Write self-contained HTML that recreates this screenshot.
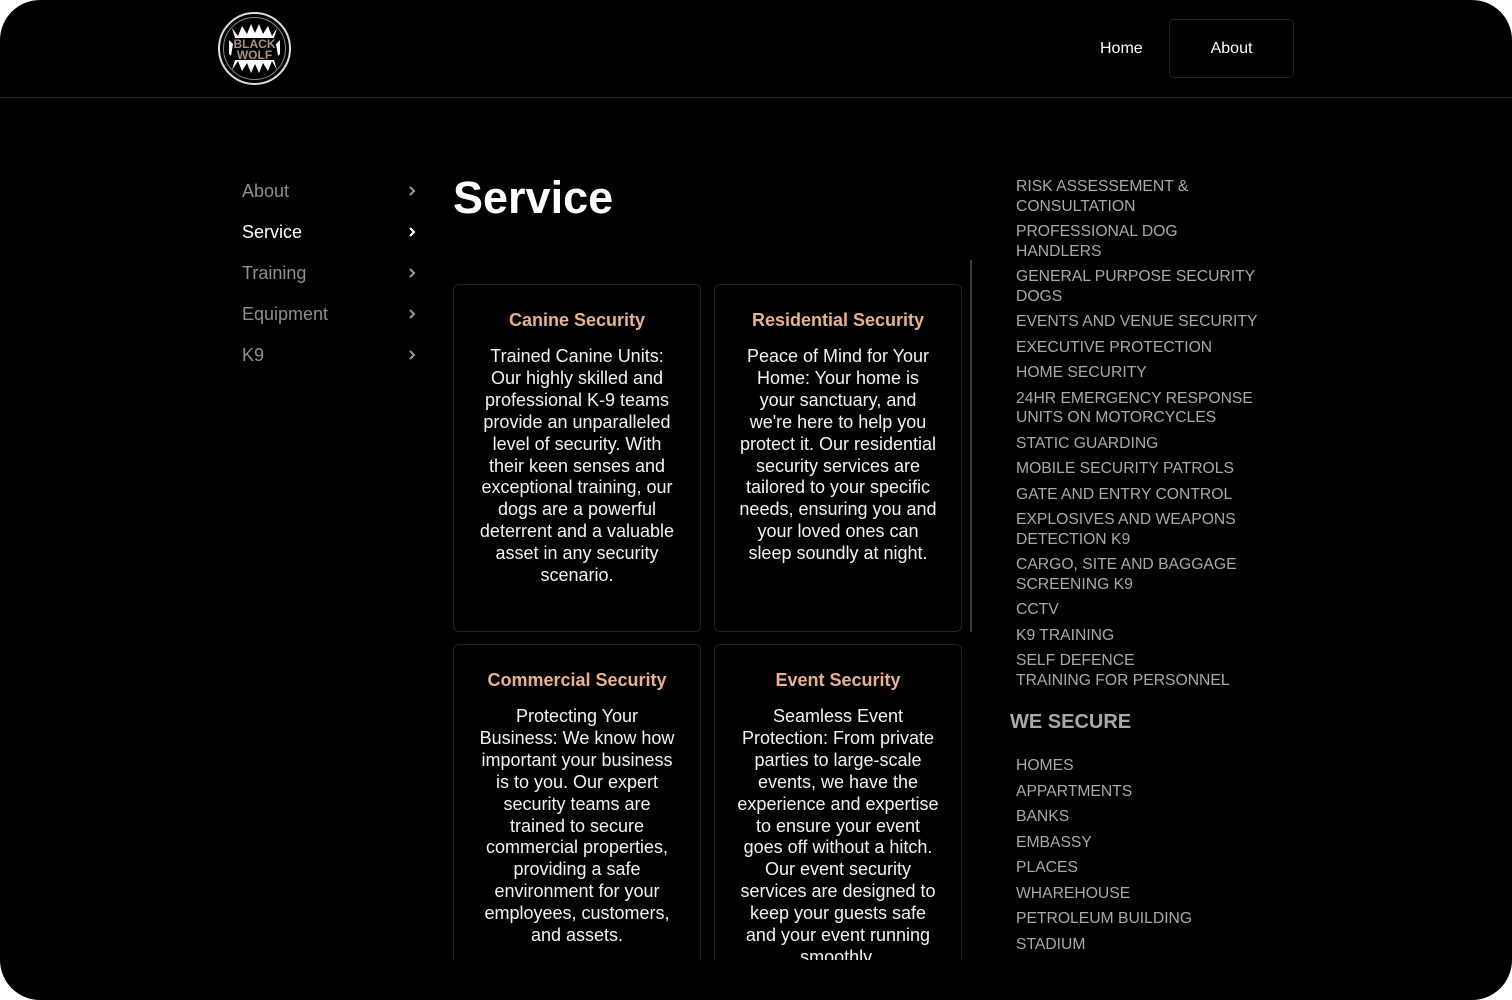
<!DOCTYPE html>
<html><head><meta charset="utf-8"><style>
*{margin:0;padding:0;box-sizing:border-box}
html,body{width:1512px;height:1000px;background:#fff;overflow:hidden}
body{font-family:"Liberation Sans",sans-serif}
.frame{position:absolute;left:0;top:0;width:1512px;height:1000px;background:#000;border-radius:40px;overflow:hidden;color:#fff}
.hdr{position:absolute;left:0;top:0;width:1512px;height:98px;border-bottom:1px solid #2a2a2a}
.logo{position:absolute;left:218px;top:12px;width:73px;height:73px;border-radius:50%;border:2px solid #ddd;background:#000;overflow:hidden}
.home{position:absolute;left:1100px;top:40px;font-size:16px}
.aboutb{position:absolute;left:1169px;top:19px;width:125px;height:59px;border:1px solid #222;border-radius:5px;font-size:16px;text-align:center;line-height:58px}
.nav{position:absolute;left:242px;top:179px;width:175px}
.nav div{height:41px;font-size:18px;color:#8e8e8e;position:relative;line-height:24px}
.nav div.a{color:#fff}
.nav div svg{position:absolute;right:0;top:6px}
h1{position:absolute;left:453px;top:172px;font-size:45px;font-weight:bold}
.main{position:absolute;left:453px;top:284px;width:509px;height:676px;overflow:hidden}
.card{position:absolute;width:248px;border:1px solid #222;border-radius:6px;text-align:center;padding:24px 22px 0}
.card h3{font-size:18px;color:#e9b18d;line-height:22px;margin-bottom:15px}
.card p{font-size:18px;line-height:21.9px;color:#f2f2f2}
.sb{position:absolute;left:970px;top:260px;width:2px;height:372px;background:#3a3a3a}
.rl{position:absolute;left:1016px;top:177px;width:260px;color:#a9a9a9;font-size:15.7px;line-height:19.5px}
.rl div{margin-bottom:6px}
.ws{position:absolute;left:1010px;top:711px;font-size:20px;font-weight:bold;color:#a9a9a9}
</style></head><body><div class="frame">
<div class="hdr">
<div class="logo"><svg width="69" height="69" viewBox="0 0 69 69">
<circle cx="34.5" cy="34.5" r="31" fill="none" stroke="#888" stroke-width="1"/>
<path d="M12 14 L18 22 L22 12 L27 20 L31 10 L35 19 L39 10 L43 20 L48 12 L52 22 L57 14 L54 24 L15 24Z" fill="#fff"/>
<path d="M12 56 L18 47 L22 57 L27 49 L31 59 L35 50 L39 59 L43 49 L48 57 L52 47 L57 56 L54 46 L15 46Z" fill="#fff"/>
<path d="M9 26 L13 30 L11 42 L9 40Z M60 26 L56 30 L58 42 L60 40Z" fill="#fff"/>
<text x="34.5" y="34" text-anchor="middle" font-size="12" font-weight="bold" fill="#a8917e" font-family="Liberation Sans">BLACK</text>
<text x="34.5" y="45" text-anchor="middle" font-size="12" font-weight="bold" fill="#a8917e" font-family="Liberation Sans">WOLF</text>
</svg></div>
<div class="home">Home</div>
<div class="aboutb">About</div>
</div>
<div class="nav">
<div>About<svg width="10" height="12" viewBox="0 0 10 12"><path d="M3 2l4 4-4 4" stroke="#999" stroke-width="2" fill="none"/></svg></div>
<div class="a">Service<svg width="10" height="12" viewBox="0 0 10 12"><path d="M3 2l4 4-4 4" stroke="#fff" stroke-width="2" fill="none"/></svg></div>
<div>Training<svg width="10" height="12" viewBox="0 0 10 12"><path d="M3 2l4 4-4 4" stroke="#999" stroke-width="2" fill="none"/></svg></div>
<div>Equipment<svg width="10" height="12" viewBox="0 0 10 12"><path d="M3 2l4 4-4 4" stroke="#999" stroke-width="2" fill="none"/></svg></div>
<div>K9<svg width="10" height="12" viewBox="0 0 10 12"><path d="M3 2l4 4-4 4" stroke="#999" stroke-width="2" fill="none"/></svg></div>
</div>
<h1>Service</h1>
<div class="main">
<div class="card" style="left:0;top:0;height:348px"><h3>Canine Security</h3><p>Trained Canine Units: Our highly skilled and professional K-9 teams provide an unparalleled level of security. With their keen senses and exceptional training, our dogs are a powerful deterrent and a valuable asset in any security scenario.</p></div>
<div class="card" style="left:261px;top:0;height:348px"><h3>Residential Security</h3><p>Peace of Mind for Your Home: Your home is your sanctuary, and we're here to help you protect it. Our residential security services are tailored to your specific needs, ensuring you and your loved ones can sleep soundly at night.</p></div>
<div class="card" style="left:0;top:360px;height:400px"><h3>Commercial Security</h3><p>Protecting Your Business: We know how important your business is to you. Our expert security teams are trained to secure commercial properties, providing a safe environment for your employees, customers, and assets.</p></div>
<div class="card" style="left:261px;top:360px;height:400px"><h3>Event Security</h3><p>Seamless Event Protection: From private parties to large-scale events, we have the experience and expertise to ensure your event goes off without a hitch. Our event security services are designed to keep your guests safe and your event running smoothly.</p></div>
</div>
<div class="sb"></div>
<div class="rl">
<div>RISK ASSESSEMENT &amp;<br>CONSULTATION</div>
<div>PROFESSIONAL DOG<br>HANDLERS</div>
<div>GENERAL PURPOSE SECURITY<br>DOGS</div>
<div>EVENTS AND VENUE SECURITY</div>
<div>EXECUTIVE PROTECTION</div>
<div>HOME SECURITY</div>
<div>24HR EMERGENCY RESPONSE<br>UNITS ON MOTORCYCLES</div>
<div>STATIC GUARDING</div>
<div>MOBILE SECURITY PATROLS</div>
<div>GATE AND ENTRY CONTROL</div>
<div>EXPLOSIVES AND WEAPONS<br>DETECTION K9</div>
<div>CARGO, SITE AND BAGGAGE<br>SCREENING K9</div>
<div>CCTV</div>
<div>K9 TRAINING</div>
<div>SELF DEFENCE<br>TRAINING FOR PERSONNEL</div>
</div>
<div class="ws">WE SECURE</div>
<div class="rl" style="top:756px">
<div>HOMES</div><div>APPARTMENTS</div><div>BANKS</div><div>EMBASSY</div><div>PLACES</div><div>WHAREHOUSE</div><div>PETROLEUM BUILDING</div><div>STADIUM</div>
</div>
</div></body></html>
